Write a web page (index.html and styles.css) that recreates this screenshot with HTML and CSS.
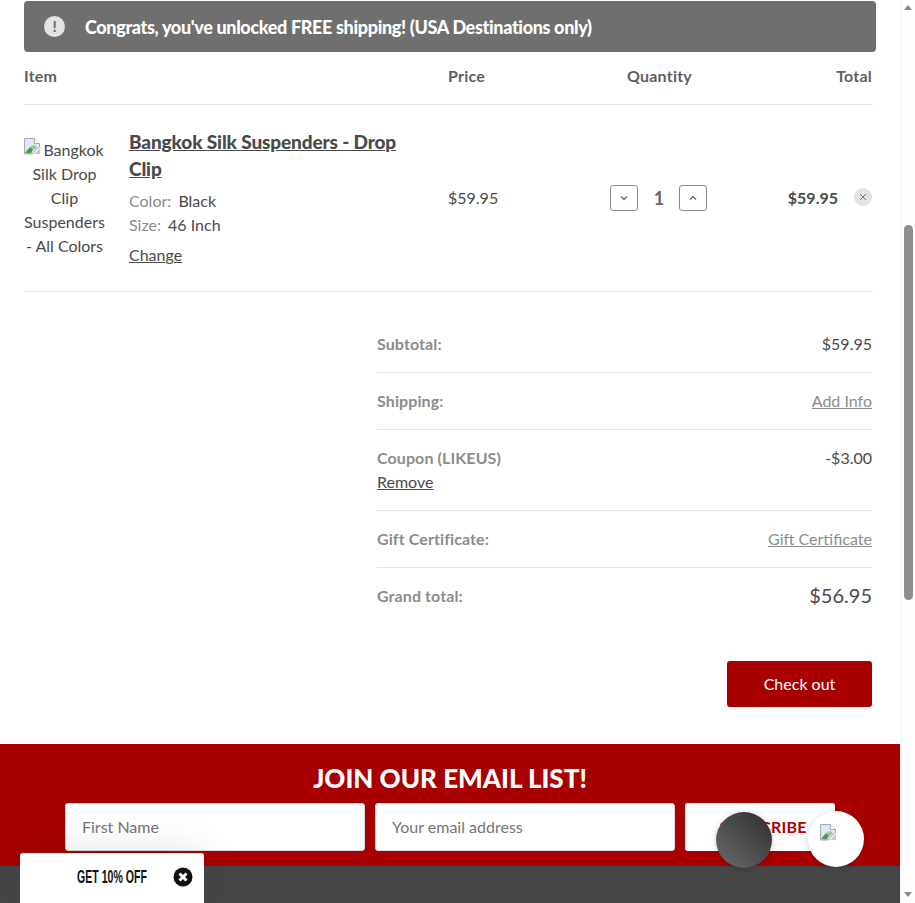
FILE: index.html
```html
<!DOCTYPE html>
<html lang="en">
<head>
    <meta charset="UTF-8">
    <title>Your Cart</title>
    <link rel="stylesheet" href="styles.css">
</head>
<body>
    <div class="page">
        <div class="cart">
            <div class="banner">
                <span class="banner-icon">!</span>
                <span class="banner-text">Congrats, you've unlocked FREE shipping! (USA Destinations only)</span>
            </div>

            <div class="cart-row cart-head">
                <div>Item</div>
                <div>Price</div>
                <div class="qty-head">Quantity</div>
                <div class="total-head">Total</div>
            </div>

            <div class="cart-row cart-item">
                <div class="item">
                    <div class="item-img">
                        <svg class="broken" width="16" height="17" viewBox="0 0 16 17">
                            <path d="M0.500 0.500h10l5 5v3.500l-4 3-3 4h-8z" fill="#dfe7f5" stroke="#a3abb8"/>
                            <path d="M1 15l5-6 3 2.500-2 4z" fill="#4f9a45"/>
                            <path d="M6 9l4-2 3 2-3 3z" fill="#9cc48f"/>
                            <path d="M10.500 0.500v5h5" fill="#fff" stroke="#a3abb8"/>
                            <path d="M11 15l5-5v6h-7z" fill="#c6cbd3"/>
                        </svg>
                        Bangkok Silk Drop Clip Suspenders - All Colors
                    </div>
                    <div class="item-info">
                        <a class="item-title" href="#">Bangkok Silk Suspenders - Drop Clip</a>
                        <div class="option"><span>Color:</span> Black</div>
                        <div class="option"><span>Size:</span> 46 Inch</div>
                        <a class="change" href="#">Change</a>
                    </div>
                </div>
                <div class="price">$59.95</div>
                <div class="qty">
                    <button class="qty-btn">
                        <svg width="10" height="6" viewBox="0 0 10 6"><path d="M2 1.500L5 4.500 8 1.500" fill="none" stroke="#666" stroke-width="1.400"/></svg>
                    </button>
                    <span class="qty-num">1</span>
                    <button class="qty-btn">
                        <svg width="10" height="6" viewBox="0 0 10 6"><path d="M2 4.500L5 1.500 8 4.500" fill="none" stroke="#666" stroke-width="1.400"/></svg>
                    </button>
                </div>
                <div class="line-total">
                    <strong>$59.95</strong>
                    <span class="remove">
                        <svg width="8" height="8" viewBox="0 0 8 8"><path d="M1 1l6 6M7 1L1 7" stroke="#777" stroke-width="1"/></svg>
                    </span>
                </div>
            </div>

            <div class="summary">
                <div class="sum-row">
                    <div class="sum-label">Subtotal:</div>
                    <div>$59.95</div>
                </div>
                <div class="sum-row">
                    <div class="sum-label">Shipping:</div>
                    <a class="sum-link" href="#">Add Info</a>
                </div>
                <div class="sum-row">
                    <div>
                        <div class="sum-label">Coupon (LIKEUS)</div>
                        <a class="coupon-remove" href="#">Remove</a>
                    </div>
                    <div>-$3.00</div>
                </div>
                <div class="sum-row">
                    <div class="sum-label">Gift Certificate:</div>
                    <a class="sum-link" href="#">Gift Certificate</a>
                </div>
                <div class="sum-row grand">
                    <div class="sum-label">Grand total:</div>
                    <div class="grand-value">$56.95</div>
                </div>
            </div>

            <div class="actions">
                <a class="checkout" href="#">Check out</a>
            </div>
        </div>

        <footer class="footer">
            <div class="signup">
                <h2>JOIN OUR EMAIL LIST!</h2>
                <form class="signup-form">
                    <input type="text" placeholder="First Name">
                    <input type="text" placeholder="Your email address">
                    <button type="button">SUBSCRIBE</button>
                </form>
            </div>
            <div class="footer-dark"></div>
        </footer>
    </div>

    <div class="scrollbar">
        <span class="arrow-up"></span>
        <div class="track"><div class="thumb"></div></div>
        <span class="arrow-down"></span>
    </div>

    <!-- floating widgets -->
    <div class="promo">
        <span class="promo-text">GET 10% OFF</span>
        <svg class="promo-close" width="20" height="20" viewBox="0 0 20 20">
            <circle cx="10" cy="10" r="9.500" fill="#111"/>
            <path d="M6.500 6.500l7 7M13.500 6.500l-7 7" stroke="#fff" stroke-width="3"/>
        </svg>
    </div>
    <div class="bubble-dark"></div>
    <div class="bubble-light">
        <svg width="16" height="17" viewBox="0 0 16 17">
            <path d="M0.500 0.500h10l5 5v3.500l-4 3-3 4h-8z" fill="#dfe7f5" stroke="#a3abb8"/>
            <path d="M1 15l5-6 3 2.500-2 4z" fill="#4f9a45"/>
            <path d="M6 9l4-2 3 2-3 3z" fill="#9cc48f"/>
            <path d="M10.500 0.500v5h5" fill="#fff" stroke="#a3abb8"/>
            <path d="M11 15l5-5v6h-7z" fill="#c6cbd3"/>
        </svg>
    </div>
</body>
</html>
```

FILE: styles.css
```css
* {
    margin: 0;
    padding: 0;
    box-sizing: border-box;
}

body {
    display: flex;
    height: 903px;
    overflow: hidden;
    background: #fff;
    color: #4a4a4a;
    font-family: Lato, "Open Sans", sans-serif;
    font-size: 16px;
    line-height: 24px;
    position: relative;
}

a {
    color: inherit;
}

.page {
    width: 900px;
    flex-shrink: 0;
}

.cart {
    height: 744px;
    padding: 1px 28px 0 24px;
}

.banner {
    width: 852px;
    height: 51px;
    display: flex;
    align-items: center;
    padding-left: 20px;
    background: #6f6f6f;
    border-radius: 4px;
    color: #fff;
    font-size: 18px;
    font-weight: 900;
    letter-spacing: -0.35px;
}

.banner-icon {
    width: 21px;
    height: 21px;
    margin-right: 20px;
    border-radius: 50%;
    background: #e3e3e3;
    color: #6f6f6f;
    font-size: 15px;
    line-height: 21px;
    text-align: center;
}

.cart-row {
    display: grid;
    grid-template-columns: 424px 130px 162px 132px;
    border-bottom: 1px solid #e5e5e5;
    width: 849px;
}

.cart-head {
    height: 53px;
    padding-top: 12px;
    font-weight: 700;
    color: #5f5f5f;
    letter-spacing: 0.2px;
}

.qty-head {
    padding-left: 1px;
    text-align: center;
}

.total-head {
    text-align: right;
}

.cart-item {
    height: 187px;
    align-items: center;
}

.item {
    display: flex;
    gap: 24px;
    align-items: flex-start;
}

.item-img {
    width: 81px;
    flex-shrink: 0;
    margin-top: 9px;
    text-align: center;
}

.broken {
    margin: 0 -1px;
    vertical-align: 1px;
}

.item-info {
    width: 271px;
    margin-top: -1px;
}

.item-title {
    display: block;
    margin-bottom: 7px;
    font-size: 19px;
    font-weight: 900;
    line-height: 27px;
    letter-spacing: -0.13px;
}

.option span {
    color: #8c8c8c;
    margin-right: 3px;
}

.change {
    display: block;
    margin-top: 6px;
}

.price {
    padding-bottom: 1px;
}

.qty {
    display: flex;
    justify-content: center;
    align-items: center;
    padding-right: 2px;
}

.qty-btn {
    width: 28px;
    height: 26px;
    display: flex;
    align-items: center;
    justify-content: center;
    background: #fff;
    border: 1px solid #8a8a8a;
    border-radius: 3px;
}

.qty-num {
    width: 41px;
    padding-left: 2px;
    text-align: center;
    font-size: 18px;
    font-weight: 700;
    color: #666;
}

.line-total {
    display: flex;
    justify-content: flex-end;
    align-items: center;
    gap: 16px;
}

.remove {
    width: 18px;
    height: 18px;
    margin-top: -2px;
    display: flex;
    align-items: center;
    justify-content: center;
    border-radius: 50%;
    background: #e2e2e2;
}

.summary {
    width: 495px;
    margin: 24px 0 0 353px;
}

.sum-row {
    display: flex;
    justify-content: space-between;
    padding: 16px 0;
    border-bottom: 1px solid #e5e5e5;
}

.sum-row.grand {
    border-bottom: none;
}

.sum-label {
    font-weight: 700;
    color: #8c8c8c;
    letter-spacing: 0.1px;
}

.sum-link {
    color: #8c8c8c;
}

.grand-value {
    font-size: 20px;
    line-height: 22px;
}

.actions {
    display: flex;
    justify-content: flex-end;
    margin-top: 37px;
    width: 848px;
}

.checkout {
    width: 145px;
    height: 46px;
    background: #a80000;
    border-radius: 3px;
    color: #fff;
    line-height: 46px;
    text-align: center;
    text-decoration: none;
}

.footer {
    height: 159px;
}

.signup {
    height: 122px;
    padding-top: 15px;
    background: #a80000;
}

.signup h2 {
    color: #fff;
    font-size: 26px;
    font-weight: 900;
    line-height: 38px;
    text-align: center;
}

.signup-form {
    display: flex;
    gap: 10px;
    margin: 6px 0 0 65px;
}

.signup-form input {
    width: 300px;
    height: 48px;
    padding: 0 0 2px 16px;
    border: 1px solid #ddd;
    border-radius: 3px;
    background: #fff;
    font-family: inherit;
    font-size: 16px;
}

.signup-form input::placeholder {
    color: #757575;
}

.signup-form button {
    width: 150px;
    height: 48px;
    padding: 0 0 2px 6px;
    border: none;
    border-radius: 3px;
    background: #fff;
    color: #a80000;
    font-family: inherit;
    font-size: 16px;
    font-weight: 700;
    letter-spacing: 0.2px;
}

.footer-dark {
    height: 37px;
    background: #464646;
}

.scrollbar {
    flex: 1;
    display: flex;
    flex-direction: column;
    align-items: center;
    background: #fdfdfd;
    border-left: 1px solid #f3f3f3;
    padding: 5px 0 6px;
}

.arrow-up {
    border: 4.500px solid transparent;
    border-top: none;
    border-bottom: 5px solid #8a8a8a;
}

.arrow-down {
    border: 4.500px solid transparent;
    border-bottom: none;
    border-top: 5px solid #8a8a8a;
}

.track {
    flex: 1;
    width: 100%;
    display: flex;
    justify-content: center;
}

.thumb {
    width: 9px;
    height: 375px;
    margin-top: 215px;
    background: #8e8e8e;
    border-radius: 5px;
}

.promo {
    position: absolute;
    left: 20px;
    top: 853px;
    width: 184px;
    height: 50px;
    display: flex;
    align-items: flex-start;
    justify-content: space-between;
    padding: 14px 11px 0 57px;
    background: #fff;
    border-radius: 3px 3px 0 0;
    box-shadow: 0 0 40px rgba(0, 0, 0, 0.12);
}

.promo-text {
    width: 70px;
    font-family: "Liberation Sans", sans-serif;
    font-size: 19px;
    font-weight: 700;
    line-height: 20px;
    color: #111;
    white-space: nowrap;
    transform: scaleX(0.556);
    transform-origin: left center;
}

.promo-close {
    flex-shrink: 0;
}

.bubble-dark {
    position: absolute;
    left: 716px;
    top: 812px;
    width: 56px;
    height: 56px;
    border-radius: 50%;
    background: linear-gradient(45deg, #6a6a6a, #2f2f2f);
    box-shadow: 0 1px 6px rgba(0, 0, 0, 0.2);
}

.bubble-light {
    position: absolute;
    left: 808px;
    top: 811px;
    width: 56px;
    height: 56px;
    padding: 12px 0 0 12px;
    border-radius: 50%;
    background: #fff;
    box-shadow: 0 1px 6px rgba(0, 0, 0, 0.2);
}
```
